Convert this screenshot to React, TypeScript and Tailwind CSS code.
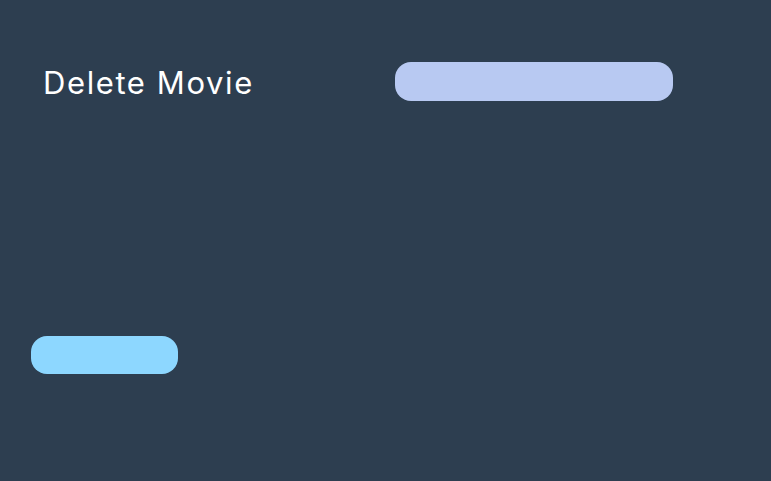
export default function App() {
  return (
    <div className="flex h-[481px] w-[771px] flex-col bg-[#2d3e50] font-['Inter',sans-serif]">
      {/* Header row */}
      <div className="flex items-start pl-[43px] pt-[62px]">
        <h1 className="w-[352px] text-[31px] leading-[41px] tracking-[1.6px] text-white">Delete Movie</h1>
        <div className="h-[39px] w-[278px] rounded-[16px] bg-[#b8c9f2]" />
      </div>

      {/* Action */}
      <div className="pl-[31px] pt-[233px]">
        <button type="button" className="block h-[38px] w-[147px] rounded-[16px] bg-[#8dd7ff]" />
      </div>
    </div>
  );
}
